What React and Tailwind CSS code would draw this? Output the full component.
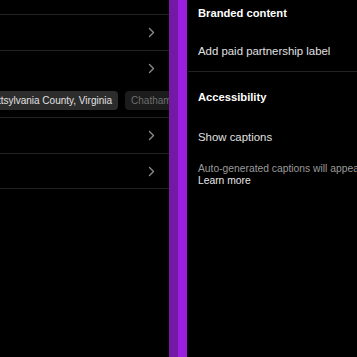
import React from "react";

const Chevron = () => (
  <svg width="7" height="11" viewBox="0 0 7 11" fill="none">
    <path d="M1.5 1.5L5.5 5.5L1.5 9.5" stroke="#8a8a8a" strokeWidth="1.4" strokeLinecap="round" strokeLinejoin="round" />
  </svg>
);

export default function App() {
  return (
    <div
      className="w-[357px] h-[357px] bg-black flex overflow-hidden"
      style={{ fontFamily: "'Liberation Sans', Arial, sans-serif" }}
    >
      {/* left panel */}
      <div className="w-[169px] shrink-0 flex flex-col overflow-hidden">
        <div className="h-[15px] border-b border-[#222]" />
        <div className="h-[36px] border-b border-[#222] flex items-center justify-end pr-[14px]">
          <Chevron />
        </div>
        <div className="h-[35px] flex items-center justify-end pr-[14px]">
          <Chevron />
        </div>
        <div className="h-[32px] border-b border-[#222] pt-[5px] overflow-hidden">
          <div className="flex gap-[7px] -ml-[17px]">
            <div className="h-[19px] shrink-0 rounded-[4px] bg-[#2c2c2c] px-[6px] flex items-center text-[10px] text-[#e0e0e0] whitespace-nowrap">
              Pittsylvania County, Virginia
            </div>
            <div className="h-[19px] shrink-0 rounded-[4px] bg-[#1c1c1c] px-[6px] flex items-center text-[10px] text-[#6e6e6e] whitespace-nowrap">
              Chatham, Virginia
            </div>
          </div>
        </div>
        <div className="h-[36px] border-b border-[#222] flex items-center justify-end pr-[14px]">
          <Chevron />
        </div>
        <div className="h-[35px] border-b border-[#222] flex items-center justify-end pr-[14px]">
          <Chevron />
        </div>
      </div>

      {/* purple divider */}
      <div className="w-[18px] shrink-0 flex">
        <div className="w-[9px] bg-[#7418a6]" />
        <div className="w-[9px] bg-[#9a1fe0]" />
      </div>

      {/* right panel */}
      <div className="flex-1 flex flex-col overflow-hidden">
        <div className="pl-[11px] h-[27px] flex items-center text-[11.2px] font-bold text-white whitespace-nowrap">
          Branded content
        </div>
        <div className="pl-[11px] h-[44px] flex items-center text-[11.4px] text-[#e0e0e0] whitespace-nowrap pt-[5px]">
          Add paid partnership label
        </div>
        <div className="ml-[1px] border-t border-[#222]" />
        <div className="pl-[11px] h-[51px] flex items-center text-[11.2px] font-bold text-white whitespace-nowrap">
          Accessibility
        </div>
        <div className="pl-[11px] h-[26px] flex items-center text-[11.4px] text-[#e0e0e0] whitespace-nowrap pt-[3px]">
          Show captions
        </div>
        <div className="pl-[11px] pt-[14px] text-[10.3px] leading-[12px] whitespace-nowrap">
          <div className="text-[#9a9a9a]">Auto-generated captions will appear on your video.</div>
          <div className="text-[#e6e6e6]">Learn more</div>
        </div>
      </div>
    </div>
  );
}
